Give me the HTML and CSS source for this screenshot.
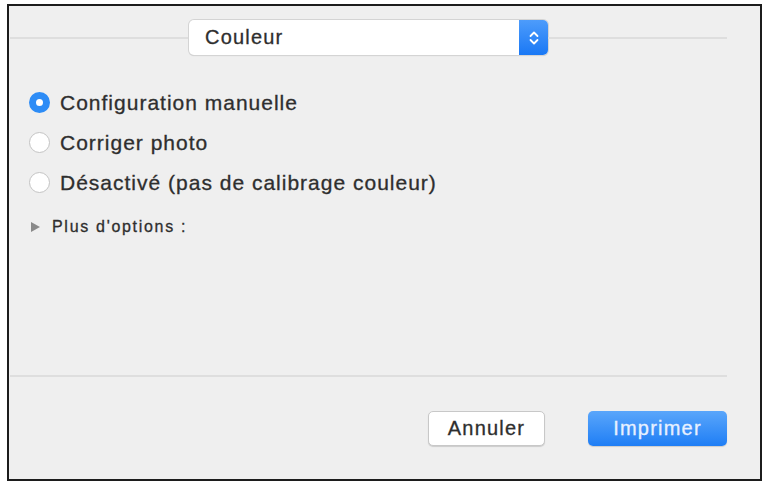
FILE: index.html
```html
<!DOCTYPE html>
<html lang="fr">
<head>
    <meta charset="UTF-8">
    <title>Couleur</title>
    <link rel="stylesheet" href="styles.css">
</head>
<body>
    <div class="dialog">
        <div class="header">
            <span class="rule"></span>
            <div class="popup">
                <span class="popup-label">Couleur</span>
                <span class="stepper">
                    <svg width="12" height="18" viewBox="0 0 12 18">
                        <path d="M2.5 7 L6 3.5 L9.5 7 M2.5 11 L6 14.5 L9.5 11" fill="none" stroke="#fff" stroke-width="1.8" stroke-linecap="round" stroke-linejoin="round"/>
                    </svg>
                </span>
            </div>
            <span class="rule"></span>
        </div>

        <div class="options">
            <label class="radio checked"><span class="dot"></span>Configuration manuelle</label>
            <label class="radio"><span class="dot"></span>Corriger photo</label>
            <label class="radio"><span class="dot"></span>Désactivé (pas de calibrage couleur)</label>
        </div>

        <div class="more">
            <span class="triangle"></span>Plus d'options :
        </div>

        <div class="footer">
            <button class="btn">Annuler</button>
            <button class="btn primary">Imprimer</button>
        </div>
    </div>
</body>
</html>
```

FILE: styles.css
```css
body {
    margin: 0;
    padding: 4px 6px 2px 7px;
    background: #fff;
    font-family: 'Liberation Sans', Arial, sans-serif;
    color: #2e2e2e;
    -webkit-text-stroke: 0.3px currentColor; /* heavier text, closer to the blurred screenshot */
}
.dialog {
    height: 477px;
    box-sizing: border-box;
    border: 2px solid #1c1c1c;
    background: #efefef;
    display: flex;
    flex-direction: column;
    padding: 0 33px 0 1px;
}
.header {
    display: flex;
    align-items: center;
    margin-top: 14px;
}
.rule {
    flex: 1;
    height: 2px;
    background: #dedede;
}
.popup {
    display: flex;
    width: 359px;
    height: 35px;
    box-sizing: border-box;
    border-radius: 5px;
    background: #fff;
    box-shadow: 0 0 0 1px #d4d4d4, 0 1px 1px rgba(0, 0, 0, 0.18);
}
.popup-label {
    flex: 1;
    padding-left: 16px;
    font-size: 20px;
    letter-spacing: 1.2px;
    line-height: 35px;
}
.stepper {
    width: 29px;
    display: flex;
    align-items: center;
    justify-content: center;
    border-radius: 0 5px 5px 0;
    background: linear-gradient(#4d9cfb, #1a78f5);
}
.options {
    display: flex;
    flex-direction: column;
    gap: 17px;
    margin: 36px 0 0 19px;
}
.radio {
    display: flex;
    align-items: center;
    gap: 10px;
    font-size: 21px;
    letter-spacing: 1px;
    height: 23px;
}
.dot {
    width: 21px;
    height: 21px;
    flex: none;
    box-sizing: border-box;
    border-radius: 50%;
    background: #fff;
    border: 1px solid #c4c4c4;
}
.radio.checked .dot {
    border: 7px solid #2d8cf6;
}
.more {
    display: flex;
    align-items: center;
    margin: 24px 0 0 21px;
    font-size: 16px;
    letter-spacing: 1.7px;
}
.triangle {
    width: 0;
    height: 0;
    border-top: 5px solid transparent;
    border-bottom: 5px solid transparent;
    border-left: 9px solid #8a8a8a;
    margin-right: 12px;
}
.footer {
    margin-top: auto;
    border-top: 2px solid #dedede;
    height: 104px;
    box-sizing: border-box;
    display: flex;
    justify-content: flex-end;
    align-items: flex-start;
    gap: 43px;
    padding-top: 34px;
}
.btn {
    height: 35px;
    font-family: inherit;
    font-size: 20px;
    letter-spacing: 1.2px;
    border-radius: 5px;
    cursor: pointer;
}
.btn:not(.primary) {
    width: 117px;
    background: #fff;
    color: #2e2e2e;
    border: 1px solid #c8c8c8;
    box-shadow: 0 1px 1px rgba(0, 0, 0, 0.15);
}
.btn.primary {
    width: 139px;
    color: #e8f1ff;
    border: none;
    background: linear-gradient(#5aa6fb, #1f7ef5);
    box-shadow: 0 1px 1px rgba(0, 0, 0, 0.15);
}
```
